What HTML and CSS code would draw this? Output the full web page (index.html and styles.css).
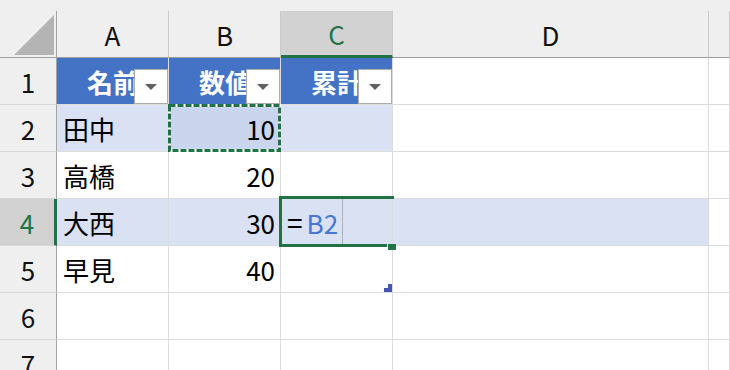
FILE: index.html
```html
<!DOCTYPE html>
<html lang="ja">
<head>
    <meta charset="utf-8">
    <title>Book1</title>
    <link rel="stylesheet" href="styles.css">
</head>
<body>
<div class="sheet">
    <div class="formula-strip"></div>

    <div class="grid">
        <!-- column headings -->
        <div class="corner"><svg width="40" height="40"><polygon points="0,40 40,0 40,40" fill="#b4b4b4"/></svg></div>
        <div class="col-head">A</div>
        <div class="col-head">B</div>
        <div class="col-head active">C</div>
        <div class="col-head">D</div>
        <div class="col-head"></div>

        <!-- row 1: table header -->
        <div class="row-head">1</div>
        <div class="cell th">名前<span class="filter-btn"><svg width="12" height="6"><polygon points="0,0 12,0 6,6"/></svg></span></div>
        <div class="cell th">数値<span class="filter-btn"><svg width="12" height="6"><polygon points="0,0 12,0 6,6"/></svg></span></div>
        <div class="cell th last">累計<span class="filter-btn"><svg width="12" height="6"><polygon points="0,0 12,0 6,6"/></svg></span></div>
        <div class="cell"></div>
        <div class="cell"></div>

        <!-- row 2 -->
        <div class="row-head">2</div>
        <div class="cell band">田中</div>
        <div class="cell band num copied">10
            <svg class="marquee" width="113" height="48">
                <rect x="1.5" y="1.5" width="110" height="45" fill="none" stroke="#fff" stroke-width="3"/>
                <rect x="1.5" y="1.5" width="110" height="45" fill="none" stroke="#217346" stroke-width="3" stroke-dasharray="6 2"/>
            </svg>
        </div>
        <div class="cell band last"></div>
        <div class="cell"></div>
        <div class="cell"></div>

        <!-- row 3 -->
        <div class="row-head">3</div>
        <div class="cell tbl">高橋</div>
        <div class="cell tbl num">20</div>
        <div class="cell tbl last"></div>
        <div class="cell"></div>
        <div class="cell"></div>

        <!-- row 4: editing C4 -->
        <div class="row-head active">4</div>
        <div class="cell band">大西</div>
        <div class="cell band num">30</div>
        <div class="cell band last editing"><span class="eq">=</span><span class="ref">B2</span>
            <span class="caret"></span>
            <span class="active-box"></span>
            <span class="fill-handle"></span>
        </div>
        <div class="cell focus"></div>
        <div class="cell"></div>

        <!-- row 5 -->
        <div class="row-head">5</div>
        <div class="cell tbl">早見</div>
        <div class="cell tbl num">40</div>
        <div class="cell tbl last">
            <svg class="resize-handle" width="8" height="8"><polygon points="0,4 4,4 4,0 8,0 8,8 0,8"/></svg>
        </div>
        <div class="cell"></div>
        <div class="cell"></div>

        <!-- rows 6, 7 -->
        <div class="row-head">6</div>
        <div class="cell"></div>
        <div class="cell"></div>
        <div class="cell"></div>
        <div class="cell"></div>
        <div class="cell"></div>

        <div class="row-head">7</div>
        <div class="cell"></div>
        <div class="cell"></div>
        <div class="cell"></div>
        <div class="cell"></div>
        <div class="cell"></div>
    </div>
</div>
</body>
</html>
```

FILE: styles.css
```css
body {
    margin: 0;
    background: #fff;
    font-family: "Noto Sans CJK JP", "Noto Sans", sans-serif;
    overflow: hidden;
}

.formula-strip {
    height: 11px;
    background: #efefef;
}

.grid {
    display: grid;
    grid-template-columns: 57px 112px 112px 112px 316px 1fr;
    grid-auto-rows: 47px;
}

.grid > div {
    box-sizing: border-box;
    position: relative;
    border-right: 1px solid #dcdcdc;
    border-bottom: 1px solid #dcdcdc;
}

/* headings */
.corner,
.col-head,
.row-head {
    background: #efefef;
    color: #111;
    font-size: 26px;
}

.corner {
    display: flex;
    justify-content: flex-end;
    align-items: flex-end;
    padding: 0 2px 2px 0;
    border-right-color: #a3a3a3 !important;
    border-bottom-color: #9e9e9e !important;
}

.corner svg {
    display: block;
}

.col-head {
    display: flex;
    align-items: center;
    justify-content: center;
    border-right-color: #cacaca !important;
    border-bottom-color: #9e9e9e !important;
}

.row-head {
    display: flex;
    align-items: center;
    justify-content: center;
    border-right-color: #a3a3a3 !important;
    border-bottom-color: #d6d6d6 !important;
}

.col-head.active {
    background: #d2d2d2;
    color: #217346;
    border-bottom: 3px solid #217346 !important;
}

.row-head.active {
    background: #d2d2d2;
    color: #217346;
    border-right: 3px solid #217346 !important;
}

/* cells */
.cell {
    display: flex;
    align-items: center;
    padding: 0 5px 0 6px;
    font-size: 26px;
    color: #000;
    white-space: nowrap;
}

.num {
    justify-content: flex-end;
}

.th {
    background: #4472c4;
    color: #fff;
    font-weight: bold;
    justify-content: center;
    border-right-color: #4472c4;
    border-bottom-color: #4472c4;
}

.band {
    background: #d9e1f2;
    border-right-color: #d9e1f2;
    border-bottom-color: #8eaadb;
}

.tbl {
    border-bottom-color: #8eaadb;
}

.last {
    border-right-color: #8eaadb;
}

.focus {
    background: #d9e1f2;
}

.copied {
    background: #c9d5ec;
}

/* filter dropdown on table header */
.filter-btn {
    position: absolute;
    right: 0;
    bottom: 0;
    width: 34px;
    height: 35px;
    box-sizing: border-box;
    border: 1px solid #acacac;
    background: #fff;
    display: flex;
    align-items: center;
    justify-content: center;
}

.filter-btn svg {
    display: block;
    fill: #606060;
}

/* copy marquee around B2 */
.marquee {
    position: absolute;
    left: -1px;
    top: -1px;
    z-index: 2;
}

/* C4 in edit mode */
.editing .eq {
    font-size: 28px;
    margin-right: 4px;
}

.editing .ref {
    color: #4678d4;
}

.caret {
    position: absolute;
    left: 61px;
    top: 0;
    width: 1px;
    height: 45px;
    background: #b0b0b0;
}

.active-box {
    position: absolute;
    left: -2px;
    top: -3px;
    width: 115px;
    height: 51px;
    box-sizing: border-box;
    border-top: 3px solid #217346;
    border-left: 3px solid #217346;
    border-bottom: 3px solid #217346;
    z-index: 2;
}

.fill-handle {
    position: absolute;
    left: 107px;
    top: 45px;
    width: 8px;
    height: 6px;
    background: #217346;
    box-shadow: -1px 0 0 #fff;
    z-index: 3;
}

.resize-handle {
    position: absolute;
    left: 103px;
    top: 38px;
    fill: #4555b2;
    z-index: 2;
}
```
